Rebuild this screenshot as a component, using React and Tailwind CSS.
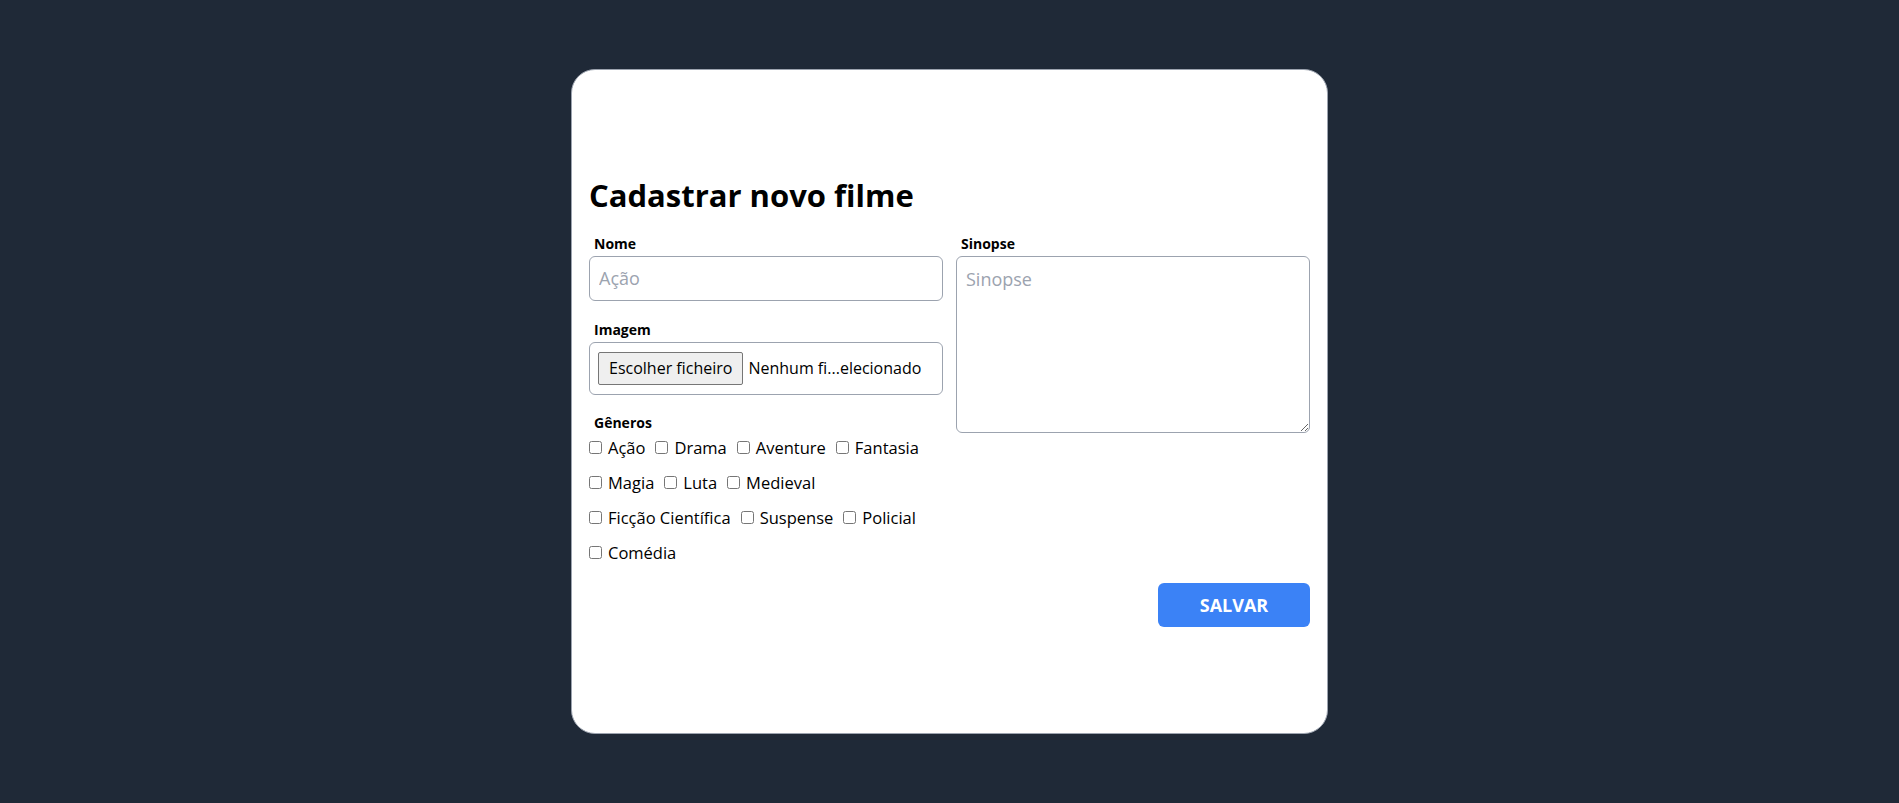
import { useState } from 'react';

const generos = [
  'Ação',
  'Drama',
  'Aventure',
  'Fantasia',
  'Magia',
  'Luta',
  'Medieval',
  'Ficção Científica',
  'Suspense',
  'Policial',
  'Comédia',
];

export default function App() {
  const [nome, setNome] = useState('');
  const [sinopse, setSinopse] = useState('');
  const [selecionados, setSelecionados] = useState([]);

  const toggleGenero = (g) => {
    setSelecionados((prev) =>
      prev.includes(g) ? prev.filter((x) => x !== g) : [...prev, g]
    );
  };

  return (
    <div
      className="min-h-screen w-full bg-[#1f2937] flex items-center justify-center"
      style={{ fontFamily: '"Open Sans", "Noto Sans", sans-serif' }}
    >
      <div className="w-[757px] h-[665px] bg-white border border-[#9ca3af] rounded-3xl flex flex-col justify-center px-[17px]">
        <h1 className="text-[31px] leading-9 font-bold text-black mb-[21px]">Cadastrar novo filme</h1>

        <div className="grid grid-cols-2 gap-x-[13px]">
          {/* left column */}
          <div className="flex flex-col">
            <label className="text-sm font-bold text-black px-[5px] mb-[2px]">Nome</label>
            <input
              type="text"
              value={nome}
              onChange={(e) => setNome(e.target.value)}
              placeholder="Ação"
              className="h-[45px] w-full border border-[#9ca3af] rounded-md px-[9px] text-lg text-black placeholder:text-[#9ca3af] outline-none"
            />

            <label className="text-sm font-bold text-black px-[5px] mt-[19px] mb-[2px]">Imagem</label>
            <div className="h-[53px] w-full border border-[#9ca3af] rounded-md flex items-center pl-[8px] text-base text-black">
              <span className="h-[33px] px-[10px] flex items-center bg-[#efefef] border border-[#767676] rounded-[2px] whitespace-nowrap">
                Escolher ficheiro
              </span>
              <span className="ml-[5px] whitespace-nowrap">Nenhum fi...elecionado</span>
            </div>

            <label className="text-sm font-bold text-black px-[5px] mt-[18px] mb-[3px]">Gêneros</label>
            <div className="flex flex-wrap gap-x-[10px] gap-y-[11px]">
              {generos.map((g) => (
                <label key={g} className="flex items-center gap-[6px] text-[16.5px] text-black leading-6">
                  <input
                    type="checkbox"
                    checked={selecionados.includes(g)}
                    onChange={() => toggleGenero(g)}
                    className="w-[13px] h-[13px]"
                  />
                  <span>{g}</span>
                </label>
              ))}
            </div>
          </div>

          {/* right column */}
          <div className="flex flex-col">
            <label className="text-sm font-bold text-black px-[5px] mb-[2px]">Sinopse</label>
            <textarea
              value={sinopse}
              onChange={(e) => setSinopse(e.target.value)}
              placeholder="Sinopse"
              className="h-[177px] w-full border border-[#9ca3af] rounded-md px-[9px] py-[8px] text-lg text-black placeholder:text-[#9ca3af] outline-none"
            />
          </div>
        </div>

        <div className="flex justify-end mt-[18px]">
          <button className="w-[152px] h-[44px] bg-[#3b82f6] rounded-md text-white text-lg font-bold">
            SALVAR
          </button>
        </div>
      </div>
    </div>
  );
}
